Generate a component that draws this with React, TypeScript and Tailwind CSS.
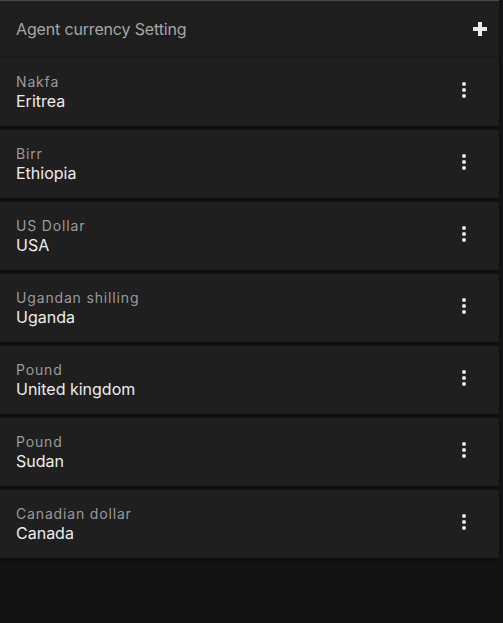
import React from "react";

const rows = [
  { c: "Nakfa", n: "Eritrea" },
  { c: "Birr", n: "Ethiopia" },
  { c: "US Dollar", n: "USA" },
  { c: "Ugandan shilling", n: "Uganda" },
  { c: "Pound", n: "United kingdom" },
  { c: "Pound", n: "Sudan" },
  { c: "Canadian dollar", n: "Canada" },
];

function Kebab() {
  return (
    <svg width="6" height="18" viewBox="0 0 6 18" className="mb-[4px]">
      <circle cx="3" cy="3" r="2" fill="#e6e6e6" />
      <circle cx="3" cy="9" r="2" fill="#e6e6e6" />
      <circle cx="3" cy="15" r="2" fill="#e6e6e6" />
    </svg>
  );
}

export default function App() {
  return (
    <div
      className="flex h-[623px] w-[503px] bg-[#111318]"
      style={{ fontFamily: "Inter, 'Noto Sans', sans-serif" }}
    >
      <div className="flex w-[499px] flex-col bg-[#131313] border-t border-[#4a4a4a]">
        <div className="flex h-[57px] items-center justify-between bg-[#1e1e1e] border-b border-[#191919] pl-4 pr-[12px]">
          <span className="text-[16px] tracking-[-0.01em] text-[#a6a6a6]">Agent currency Setting</span>
          <svg width="14" height="14" viewBox="0 0 14 14" className="mb-[1px]">
            <rect x="5" y="0" width="4" height="14" fill="#ececec" />
            <rect x="0" y="5" width="14" height="4" fill="#ececec" />
          </svg>
        </div>
        <div className="flex flex-col gap-[4px]">
          {rows.map((r, i) => (
            <div
              key={i}
              className="flex h-[68px] items-center justify-between bg-[#1f1f1f] pl-4 pr-[32px] shadow-[0_2px_3px_rgba(0,0,0,0.35)]"
            >
              <div className="flex flex-col">
                <span className="text-[14px] leading-[18px] tracking-[0.06em] text-[#9a9a9a]">{r.c}</span>
                <span className="text-[16px] leading-[20px] text-[#ededed]">{r.n}</span>
              </div>
              <Kebab />
            </div>
          ))}
        </div>
      </div>
      <div className="w-[4px]" />
    </div>
  );
}
